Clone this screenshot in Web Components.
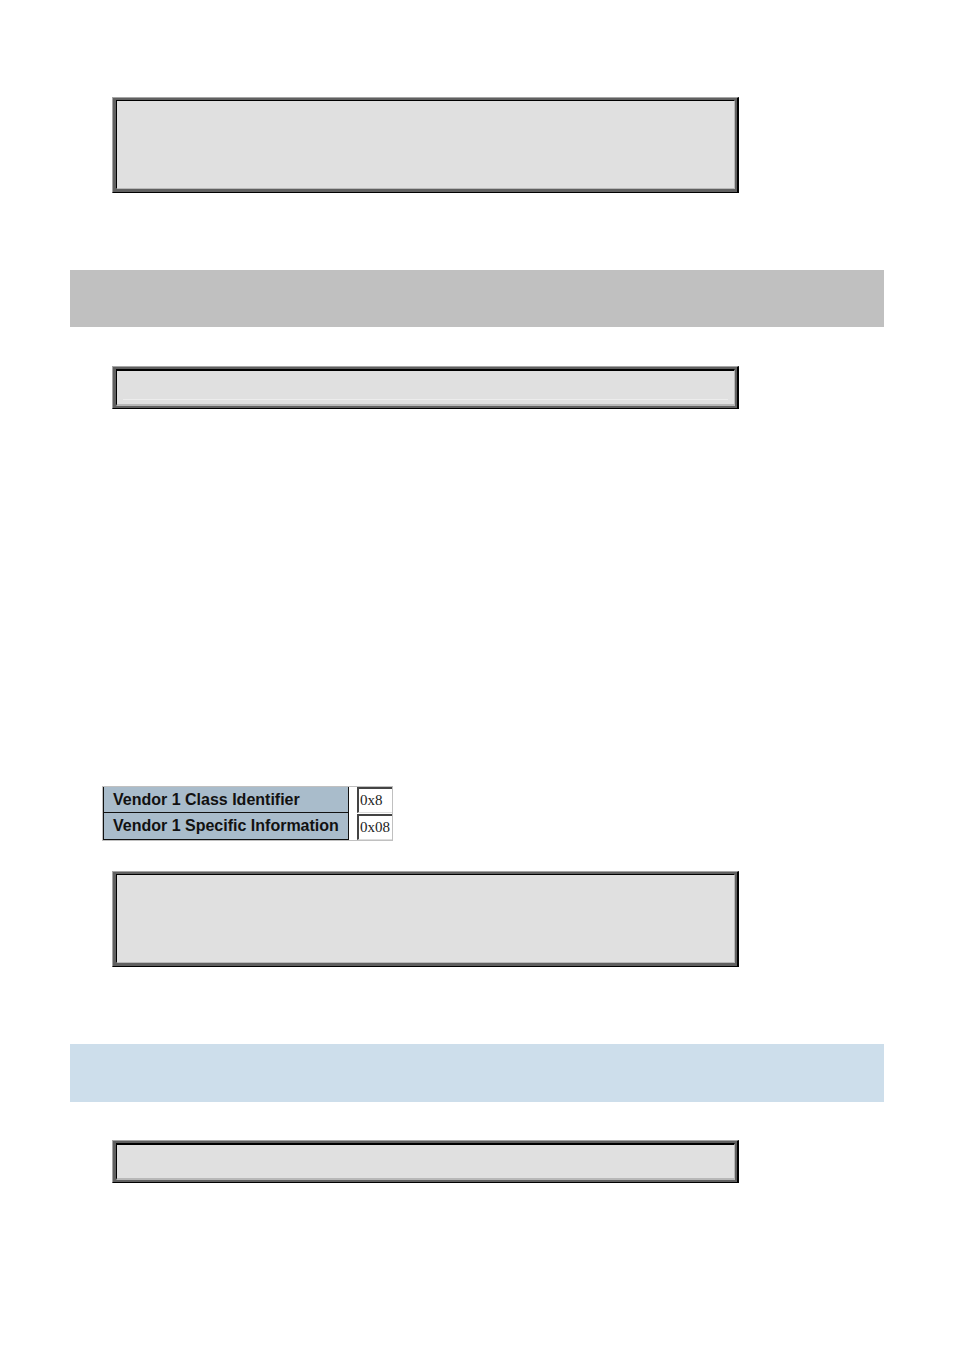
<!DOCTYPE html>
<html lang="en">
<head>
<meta charset="utf-8">
<title>Vendor class settings</title>
<style>
body { margin: 0; background: #fff; font-family: "Liberation Sans", Arial, sans-serif; }
</style>
</head>
<body>
<manual-page>
  <bevel-panel class="tall"></bevel-panel>
  <section-band></section-band>
  <bevel-panel class="short" lined></bevel-panel>
  <vendor-table></vendor-table>
  <bevel-panel class="tall second"></bevel-panel>
  <section-band tone="blue"></section-band>
  <bevel-panel class="short last"></bevel-panel>
</manual-page>
<script>
function define(name, markup) {
  const template = document.createElement('template');
  template.innerHTML = markup;
  customElements.define(name, class extends HTMLElement {
    constructor() {
      super();
      this.attachShadow({ mode: 'open' }).append(template.content.cloneNode(true));
    }
  });
}

define('manual-page', `
<style>
  :host { display: flex; flex-direction: column; padding: 97px 70px 167px; }
  ::slotted(bevel-panel) { margin: 0 145px 0 42px; }
  ::slotted(.tall) { --panel-height: 89px; margin-bottom: 77px; }
  ::slotted(.short) { --panel-height: 37px; margin-top: 39px; }
  ::slotted(.last) { margin-top: 38px; }
  ::slotted(vendor-table) { margin: 377px 0 30px 32px; align-self: flex-start; }
</style>
<slot></slot>`);

define('bevel-panel', `
<style>
  :host { display: block; }
  .rim { border: 1px solid; border-color: #a6a6a6 #000 #000 #a6a6a6; border-right-width: 2px; }
  .frame { border: solid #606060; border-width: 2px 2px 3px 3px; }
  .face {
    box-sizing: border-box; min-height: var(--panel-height);
    border: 1px solid; border-color: #000 #b8b8b8 #b8b8b8 #000;
    background: #e0e0e0; display: flex; align-items: flex-end; padding: 0 6px 4px;
  }
  .rule { flex: 1; height: 1px; background: transparent; }
  :host([lined]) .rule { background: #ececec; }
  :host(.short) .face { border-top-width: 2px; border-bottom-width: 2px; }
  :host(.short) .frame { border-bottom-width: 2px; }
</style>
<div class="rim"><div class="frame"><div class="face"><div class="rule"></div></div></div></div>`);

define('section-band', `
<style>
  :host { display: block; min-height: 57px; background: #c0c0c0; }
  :host([tone="blue"]) { min-height: 58px; background: #cddeeb; }
</style>`);

define('vendor-table', `
<style>
  :host { display: block; border: 1px solid #c0c0c0; background: #fff; }
  table { border-collapse: separate; border-spacing: 0; }
  th {
    box-sizing: border-box; width: 246px; height: 27px; padding: 0 0 0 9px;
    text-align: left; background: #a9bccb; color: #111;
    border: solid #111; border-width: 0 1px 1px 1px;
    font: bold 16px/26px "Liberation Sans", Arial, sans-serif; white-space: nowrap;
  }
  tr:first-child th { height: 26px; line-height: 25px; }
  td { padding: 0 0 0 8px; vertical-align: bottom; }
  input {
    display: block; box-sizing: border-box; width: 35px; height: 26px; margin: 0; padding: 0 0 0 1px;
    border: solid; border-width: 2px 0 1px 2px; border-color: #444 #ddd #ddd #444; border-radius: 0;
    background: #fff; color: #222; outline: none;
    font: 15px/20px "Liberation Serif", "Times New Roman", serif;
  }
</style>
<table>
  <tbody>
    <tr><th scope="row"><label for="class-id">Vendor 1 Class Identifier</label></th>
      <td><input id="class-id" type="text" value="0x8"></td></tr>
    <tr><th scope="row"><label for="specific-info">Vendor 1 Specific Information</label></th>
      <td><input id="specific-info" type="text" value="0x08"></td></tr>
  </tbody>
</table>`);
</script>
</body>
</html>
